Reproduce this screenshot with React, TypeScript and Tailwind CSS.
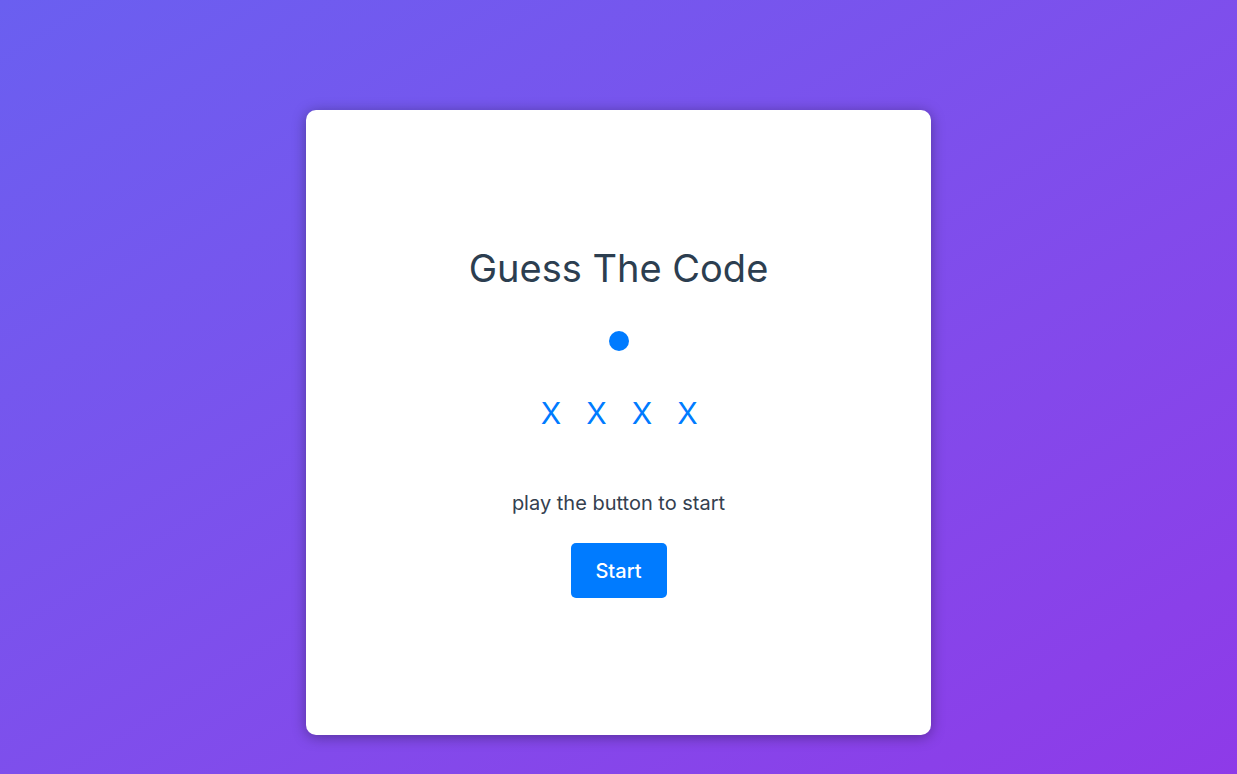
export default function App() {
  const slots = ["X", "X", "X", "X"];

  return (
    <div
      className="min-h-screen w-full bg-gradient-to-br from-[#6a5ff0] to-[#8e3ae8] pt-[110px]"
      style={{ fontFamily: "Inter, 'Noto Sans', sans-serif" }}
    >
      <div className="mx-auto flex h-[625px] w-[625px] flex-col items-center rounded-[10px] bg-white pt-[135px] shadow-[0_2px_14px_rgba(0,0,0,0.35)]">
        <h1 className="text-[38px] leading-[46px] font-normal text-[#2c3e50]">Guess The Code</h1>

        <div className="mt-[40px] h-[20px] w-[20px] rounded-full bg-[#007bff]"></div>

        <div className="mt-[44px] flex items-center gap-[26.5px] text-[30px] leading-[36px] text-[#007bff]">
          {slots.map((s, i) => (
            <span key={i} className="w-[19px] text-center">
              {s}
            </span>
          ))}
        </div>

        <p className="mt-[57px] text-[20px] leading-[30px] text-[#34404f]">play the button to start</p>

        <button className="mt-[25px] flex h-[55px] w-[96px] items-center justify-center rounded-[5px] bg-[#007bff] text-[20px] font-medium text-white">
          Start
        </button>
      </div>
    </div>
  );
}
